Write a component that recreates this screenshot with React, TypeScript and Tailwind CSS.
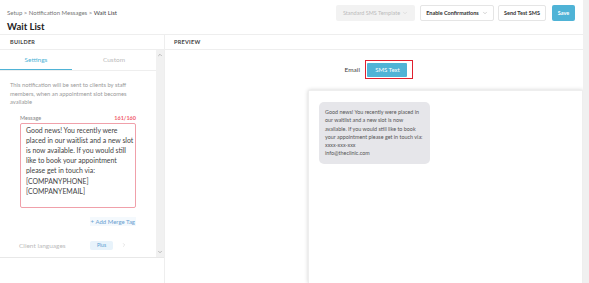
import { ChevronDown, ChevronUp, ChevronRight } from "lucide-react"

const font = { fontFamily: "Lato, 'Noto Sans', sans-serif" }

export default function App() {
  return (
    <div className="w-[589px] h-[283px] overflow-hidden bg-white flex text-[#333]" style={font}>
      <div className="flex-1 min-w-0 flex flex-col">
        {/* top header */}
        <div className="h-[35px] shrink-0 flex items-start justify-between pl-[7px] pr-[8px] border-b border-[#eee]">
          <div className="pt-[9px]">
            <div className="text-[6px] text-[#777] leading-[8px]">
              Setup &gt; Notification Messages &gt; <span className="text-[#444]">Wait List</span>
            </div>
            <div className="text-[9.5px] font-bold leading-[12px] mt-[4px] text-[#222]">Wait List</div>
          </div>
          <div className="flex items-center pt-[5px]">
            <div className="h-[16px] w-[79px] bg-[#f2f2f2] rounded-[2px] flex items-center justify-center gap-[2px] text-[5.5px] text-[#bbb]">
              Standard SMS Template <ChevronDown size={6} strokeWidth={1.5} />
            </div>
            <div className="h-[16px] w-[74px] ml-[5px] border border-[#e5e5e5] rounded-[2px] flex items-center justify-center gap-[3px] text-[5.5px] font-bold text-[#333]">
              Enable Confirmations <ChevronDown size={6} strokeWidth={1.5} className="text-[#888]" />
            </div>
            <div className="h-[16px] w-[48px] ml-[4px] border border-[#e5e5e5] rounded-[2px] flex items-center justify-center text-[5.5px] font-bold text-[#333]">
              Send Test SMS
            </div>
            <div className="h-[16px] w-[23px] ml-[6px] bg-[#4fb3d6] rounded-[2px] flex items-center justify-center text-[5.5px] font-bold text-white">
              Save
            </div>
          </div>
        </div>
        {/* body */}
        <div className="flex flex-1 min-h-0">
          {/* builder */}
          <div className="w-[165px] shrink-0 border-r border-[#eee] flex flex-col">
            <div className="h-[15px] border-b border-[#eee] flex items-center pl-[10px] text-[5.5px] font-bold text-[#444] tracking-[0.3px]">
              BUILDER
            </div>
            <div className="h-[208px] flex border-b border-[#e8e8e8]">
              <div className="flex-1 min-w-0 flex flex-col overflow-hidden">
                <div className="flex h-[21px] border-b border-[#eee]">
                  <div className="w-[72px] flex items-center justify-center text-[6.5px] text-[#4fb3d6] border-b-[1.5px] border-[#4fb3d6]">
                    Settings
                  </div>
                  <div className="flex-1 flex items-center justify-center text-[6.5px] text-[#bbb]">Custom</div>
                </div>
                <div className="px-[10px] pt-[10px] text-[5.8px] leading-[8.5px] text-[#999]">
                  This notification will be sent to clients by staff members, when an appointment slot becomes available
                </div>
                <div className="pl-[20px] pr-[20px] mt-[7px]">
                  <div className="flex justify-between items-center text-[5.5px] leading-[8px]">
                    <span className="text-[#888]">Message</span>
                    <span className="text-[#f05a6a] font-bold">161/160</span>
                  </div>
                  <div className="mt-[1px] h-[85px] border border-[#f0a0aa] rounded-[2px] px-[5px] pt-[1px] text-[6.9px] leading-[10.2px] text-[#444] whitespace-nowrap overflow-hidden">
                    Good news! You recently were<br />
                    placed in our waitlist and a new slot<br />
                    is now available. If you would still<br />
                    like to book your appointment<br />
                    please get in touch via:<br />
                    [COMPANYPHONE]<br />
                    [COMPANYEMAIL]
                  </div>
                  <div className="flex justify-end mt-[9px]">
                    <span className="text-[6px] text-[#6aa0d0] bg-[#f4f9fd] px-[1px]">+ Add Merge Tag</span>
                  </div>
                </div>
                <div className="flex items-center pl-[19px] mt-[15px] text-[6.5px] text-[#bbb]">
                  <span className="w-[71px]">Client languages</span>
                  <span className="w-[23px] h-[9px] bg-[#e8f3fb] rounded-[2px] text-[5px] text-[#5a9bd0] flex items-center justify-center">Plus</span>
                  <ChevronRight size={6} className="ml-[8px] text-[#ccc]" />
                </div>
              </div>
              <div className="w-[8px] shrink-0 bg-[#f1f1f1] flex flex-col justify-between items-center py-[2px]">
                <ChevronUp size={6} strokeWidth={2.5} className="text-[#999]" />
                <ChevronDown size={6} strokeWidth={2.5} className="text-[#999]" />
              </div>
            </div>
          </div>
          {/* preview */}
          <div className="flex-1 min-w-0 flex flex-col">
            <div className="h-[15px] border-b border-[#eee] flex items-center pl-[9px] text-[5.5px] font-bold text-[#444] tracking-[0.3px]">
              PREVIEW
            </div>
            <div className="flex justify-center pt-[10px]">
              <div className="flex items-center gap-[3px] ml-[8px]">
                <span className="text-[6.5px] text-[#444] px-[2px]">Email</span>
                <div className="border-[1.5px] border-[#e0202e] p-[1.5px] pr-[5px]">
                  <div className="h-[14px] w-[40px] bg-[#4fb3d6] rounded-[1px] flex items-center justify-center text-[6px] text-white">
                    SMS Text
                  </div>
                </div>
              </div>
            </div>
            <div className="flex justify-start pl-[143px] mt-[11px] flex-1">
              <div className="w-[141px] flex-1 bg-white shadow-[0_0_4px_rgba(0,0,0,0.18)] border border-[#eee] border-b-0 pt-[11px] px-[10px]">
                <div className="w-[111px] bg-[#e6e6ea] rounded-[5px] px-[6px] py-[6px] text-[5.4px] leading-[8.3px] text-[#555] whitespace-nowrap">
                  Good news! You recently were placed in<br />
                  our waitlist and a new slot is now<br />
                  available. If you would still like to book<br />
                  your appointment please get in touch via:<br />
                  xxxx-xxx-xxx<br />
                  info@theclinic.com
                </div>
              </div>
            </div>
          </div>
        </div>
      </div>
      <div className="w-[6px] shrink-0 bg-[#f0f0f0]" />
    </div>
  )
}
